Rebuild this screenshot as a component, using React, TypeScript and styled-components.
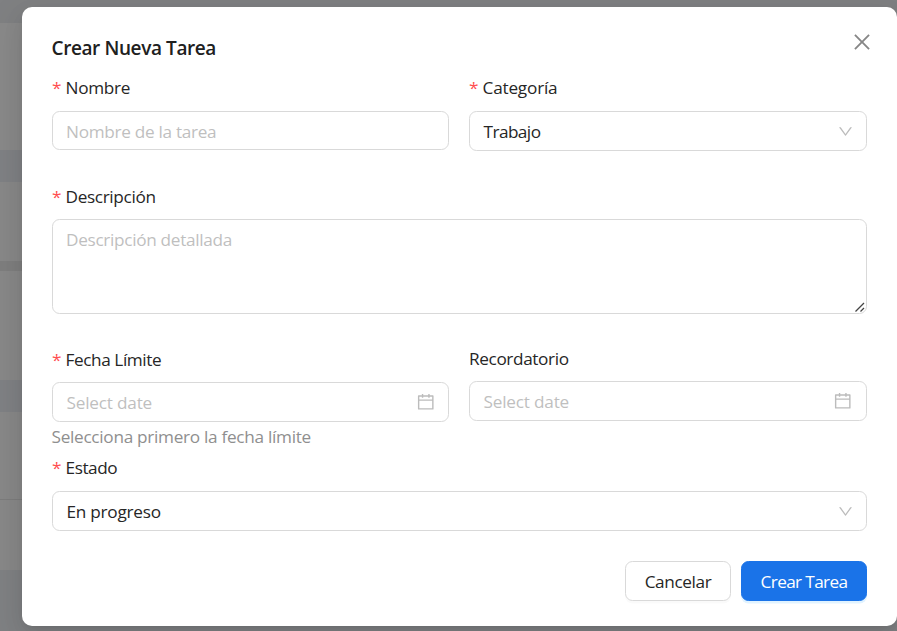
import React from "react";
import styled, { createGlobalStyle } from "styled-components";

const Global = createGlobalStyle`
  *, *::before, *::after { box-sizing: border-box; }
  html, body, #root { height: 100%; margin: 0; }
  body {
    overflow: hidden;
    background: #7f8183;
    font-family: "Open Sans", "Noto Sans", sans-serif;
    font-size: 17.2px;
    line-height: 28px;
    color: #262626;
  }
`;

const Page = styled.div`
  position: relative;
  height: 631px;
  overflow: hidden;
`;

const Backdrop = styled.div`
  display: flex;
  flex-direction: column;
  height: 100%;
`;

const Band = styled.div<{ $h: number; $color: string }>`
  flex: 0 0 ${(p) => p.$h}px;
  background: ${(p) => p.$color};
`;

const Dialog = styled.section`
  position: absolute;
  inset: 7px 0 5px 22px;
  padding: 27px 30px 0;
  background: #fff;
  border-radius: 10px;
  box-shadow: 0 7px 20px rgba(0, 0, 0, 0.08), 0 4px 8px -5px rgba(0, 0, 0, 0.12),
    0 11px 35px 10px rgba(0, 0, 0, 0.05);
`;

const Header = styled.header`
  display: flex;
  justify-content: space-between;
  height: 40px;
`;

const Title = styled.h2<{ $ls: number }>`
  margin: 0 0 0 -0.5px;
  font-size: 19px;
  font-weight: 600;
  line-height: 28px;
  letter-spacing: ${(p) => p.$ls}px;
  color: #202020;
`;

const CloseButton = styled.button`
  display: flex;
  align-items: center;
  justify-content: center;
  width: 28px;
  height: 28px;
  margin: -6px -9px 0 0;
  padding: 0;
  border: 0;
  background: none;
  color: #868686;
`;

const Columns = styled.div`
  display: grid;
  grid-template-columns: 397px 398px;
  column-gap: 20px;
`;

const Field = styled.div<{ $height?: number; $lift?: number }>`
  display: flex;
  flex-direction: column;
  height: ${(p) => (p.$height ? `${p.$height}px` : "auto")};
  margin-top: ${(p) => -(p.$lift ?? 0)}px;
`;

const Label = styled.label<{ $ls: number; $required?: boolean; $h?: number; $drop?: number }>`
  display: flex;
  height: ${(p) => p.$h ?? 37}px;
  padding-top: ${(p) => p.$drop ?? 0}px;
  white-space: nowrap;
  letter-spacing: ${(p) => p.$ls}px;
  &::before {
    content: "*";
    display: ${(p) => (p.$required ? "block" : "none")};
    width: 13.5px;
    letter-spacing: 0;
    color: #ff4d4f;
  }
`;

const TextInput = styled.input<{ $ls: number }>`
  width: 100%;
  height: 39px;
  padding: 2px 14px 0 13px;
  border: 1px solid #d9d9d9;
  border-radius: 7.5px;
  outline: 0;
  background: #fff;
  font: inherit;
  letter-spacing: ${(p) => p.$ls}px;
  &::placeholder {
    color: #bfbfbf;
    opacity: 1;
  }
`;

const AreaWrap = styled.div`
  position: relative;
  height: 95px;
`;

const TextArea = styled.textarea<{ $ls: number }>`
  display: block;
  width: 100%;
  height: 95px;
  padding: 6px 14px 6px 13px;
  border: 1px solid #d9d9d9;
  border-radius: 7.5px;
  outline: 0;
  resize: none;
  background: #fff;
  font: inherit;
  letter-spacing: ${(p) => p.$ls}px;
  &::placeholder {
    color: #bfbfbf;
    opacity: 1;
  }
`;

const Grip = styled.svg`
  position: absolute;
  right: 2px;
  bottom: 2px;
`;

const Control = styled.div<{ $muted?: boolean; $ls: number; $end?: number }>`
  display: flex;
  align-items: center;
  justify-content: space-between;
  flex: 0 0 40px;
  padding: 0 ${(p) => p.$end ?? 13.5}px 0 13.5px;
  border: 1px solid #d9d9d9;
  border-radius: 7.5px;
  color: ${(p) => (p.$muted ? "#bfbfbf" : "#262626")};
  letter-spacing: ${(p) => p.$ls}px;
  & > svg {
    color: #bcbcbc;
  }
`;

const Value = styled.span`
  padding-top: 2px;
`;

const Help = styled.div<{ $ls: number }>`
  height: 32px;
  margin-left: -0.5px;
  line-height: 30px;
  color: #8f8f8f;
  letter-spacing: ${(p) => p.$ls}px;
`;

const Footer = styled.footer`
  display: flex;
  justify-content: flex-end;
  gap: 10px;
  margin-top: 30px;
`;

const Button = styled.button<{ $primary?: boolean; $w: number; $ls: number }>`
  width: ${(p) => p.$w}px;
  height: 40px;
  padding: 1px 0 0;
  border: 1px solid ${(p) => (p.$primary ? "#1a73e8" : "#d9d9d9")};
  border-radius: 7.5px;
  background: ${(p) => (p.$primary ? "#1a73e8" : "#fff")};
  box-shadow: 0 2.5px 0 ${(p) => (p.$primary ? "#e1f3ff" : "rgba(0, 0, 0, 0.02)")};
  color: ${(p) => (p.$primary ? "#fff" : "#262626")};
  font: inherit;
  letter-spacing: ${(p) => p.$ls}px;
`;

const icons = {
  close:
    "M799.86 166.31c.02 0 .04.02.08.06l57.69 57.7c.04.03.05.05.06.08a.12.12 0 010 .06c0 .03-.02.05-.06.09L569.93 512l287.7 287.7c.04.04.05.06.06.09a.12.12 0 010 .07c0 .02-.02.04-.06.08l-57.7 57.69c-.03.04-.05.05-.07.06a.12.12 0 01-.07 0c-.03 0-.05-.02-.09-.06L512 569.93l-287.7 287.7c-.04.04-.06.05-.09.06a.12.12 0 01-.07 0c-.02 0-.04-.02-.08-.06l-57.69-57.7c-.04-.03-.05-.05-.06-.07a.12.12 0 010-.07c0-.03.02-.05.06-.09L454.07 512l-287.7-287.7c-.04-.04-.05-.06-.06-.09a.12.12 0 010-.07c0-.02.02-.04.06-.08l57.7-57.69c.03-.04.05-.05.07-.06a.12.12 0 01.07 0c.03 0 .05.02.09.06L512 454.07l287.7-287.7c.04-.04.06-.05.09-.06a.12.12 0 01.07 0z",
  down: "M884 256h-75c-5.1 0-9.9 2.5-12.9 6.6L512 654.2 227.9 262.6c-3-4.1-7.8-6.6-12.9-6.6h-75c-6.5 0-10.3 7.4-6.5 12.7l352.6 486.1c12.8 17.6 39 17.6 51.7 0l352.6-486.1c3.9-5.3.1-12.7-6.4-12.7z",
  calendar:
    "M880 184H712v-64c0-4.4-3.6-8-8-8h-56c-4.4 0-8 3.6-8 8v64H384v-64c0-4.4-3.6-8-8-8h-56c-4.4 0-8 3.6-8 8v64H144c-17.7 0-32 14.3-32 32v664c0 17.7 14.3 32 32 32h736c17.7 0 32-14.3 32-32V216c0-17.7-14.3-32-32-32zm-40 656H184V460h656v380zM184 392V256h128v48c0 4.4 3.6 8 8 8h56c4.4 0 8-3.6 8-8v-48h256v48c0 4.4 3.6 8 8 8h56c4.4 0 8-3.6 8-8v-48h128v136H184z",
};

function Icon({ name, size }: { name: keyof typeof icons; size: number }) {
  return (
    <svg viewBox="64 64 896 896" width={size} height={size} fill="currentColor" fillRule="evenodd" aria-hidden="true">
      <path d={icons[name]} />
    </svg>
  );
}

const bands: Array<[number, string]> = [
  [23, "#7f8082"],
  [127, "#898989"],
  [32, "#7f8184"],
  [79, "#888888"],
  [10, "#7e7e7e"],
  [109, "#888888"],
  [32, "#7f8184"],
  [87, "#888888"],
  [1, "#7c7c7c"],
  [70, "#888888"],
  [61, "#7f8183"],
];

export default function App() {
  return (
    <Page>
      <Global />
      <Backdrop>
        {bands.map(([h, color], i) => (
          <Band key={i} $h={h} $color={color} />
        ))}
      </Backdrop>
      <Dialog role="dialog" aria-label="Crear Nueva Tarea">
        <Header>
          <Title $ls={-0.4}>Crear Nueva Tarea</Title>
          <CloseButton aria-label="Cerrar">
            <Icon name="close" size={20} />
          </CloseButton>
        </Header>
        <Columns>
          <Field $height={109}>
            <Label $required $ls={-0.3}>Nombre</Label>
            <TextInput $ls={-0.3} placeholder="Nombre de la tarea" />
          </Field>
          <Field>
            <Label $required $ls={-0.2}>Categoría</Label>
            <Control $ls={-0.55}>
              <Value>Trabajo</Value>
              <Icon name="down" size={15} />
            </Control>
          </Field>
        </Columns>
        <Field $height={162}>
          <Label $required $h={36} $ls={-0.34}>Descripción</Label>
          <AreaWrap>
            <TextArea $ls={-0.31} placeholder="Descripción detallada" />
            <Grip width="10" height="10" viewBox="0 0 10 10" stroke="#444" strokeWidth="1.3" fill="none">
              <path d="M0.5 9.5L9 1M5.5 9.5L9 6" />
            </Grip>
          </AreaWrap>
        </Field>
        <Columns>
          <Field>
            <Label $required $drop={1} $ls={-0.41}>Fecha Límite</Label>
            <Control $muted $ls={-0.2}>
              <Value>Select date</Value>
              <Icon name="calendar" size={17.5} />
            </Control>
            <Help $ls={-0.29}>Selecciona primero la fecha límite</Help>
          </Field>
          <Field $lift={1}>
            <Label $drop={1} $ls={-0.37}>Recordatorio</Label>
            <Control $muted $end={14.3} $ls={-0.2}>
              <Value>Select date</Value>
              <Icon name="calendar" size={17.5} />
            </Control>
          </Field>
        </Columns>
        <Field>
          <Label $required $ls={-0.42}>Estado</Label>
          <Control $ls={-0.25}>
            <Value>En progreso</Value>
            <Icon name="down" size={15} />
          </Control>
        </Field>
        <Footer>
          <Button $w={106} $ls={-0.38}>Cancelar</Button>
          <Button $primary $w={126} $ls={-0.62}>Crear Tarea</Button>
        </Footer>
      </Dialog>
    </Page>
  );
}
